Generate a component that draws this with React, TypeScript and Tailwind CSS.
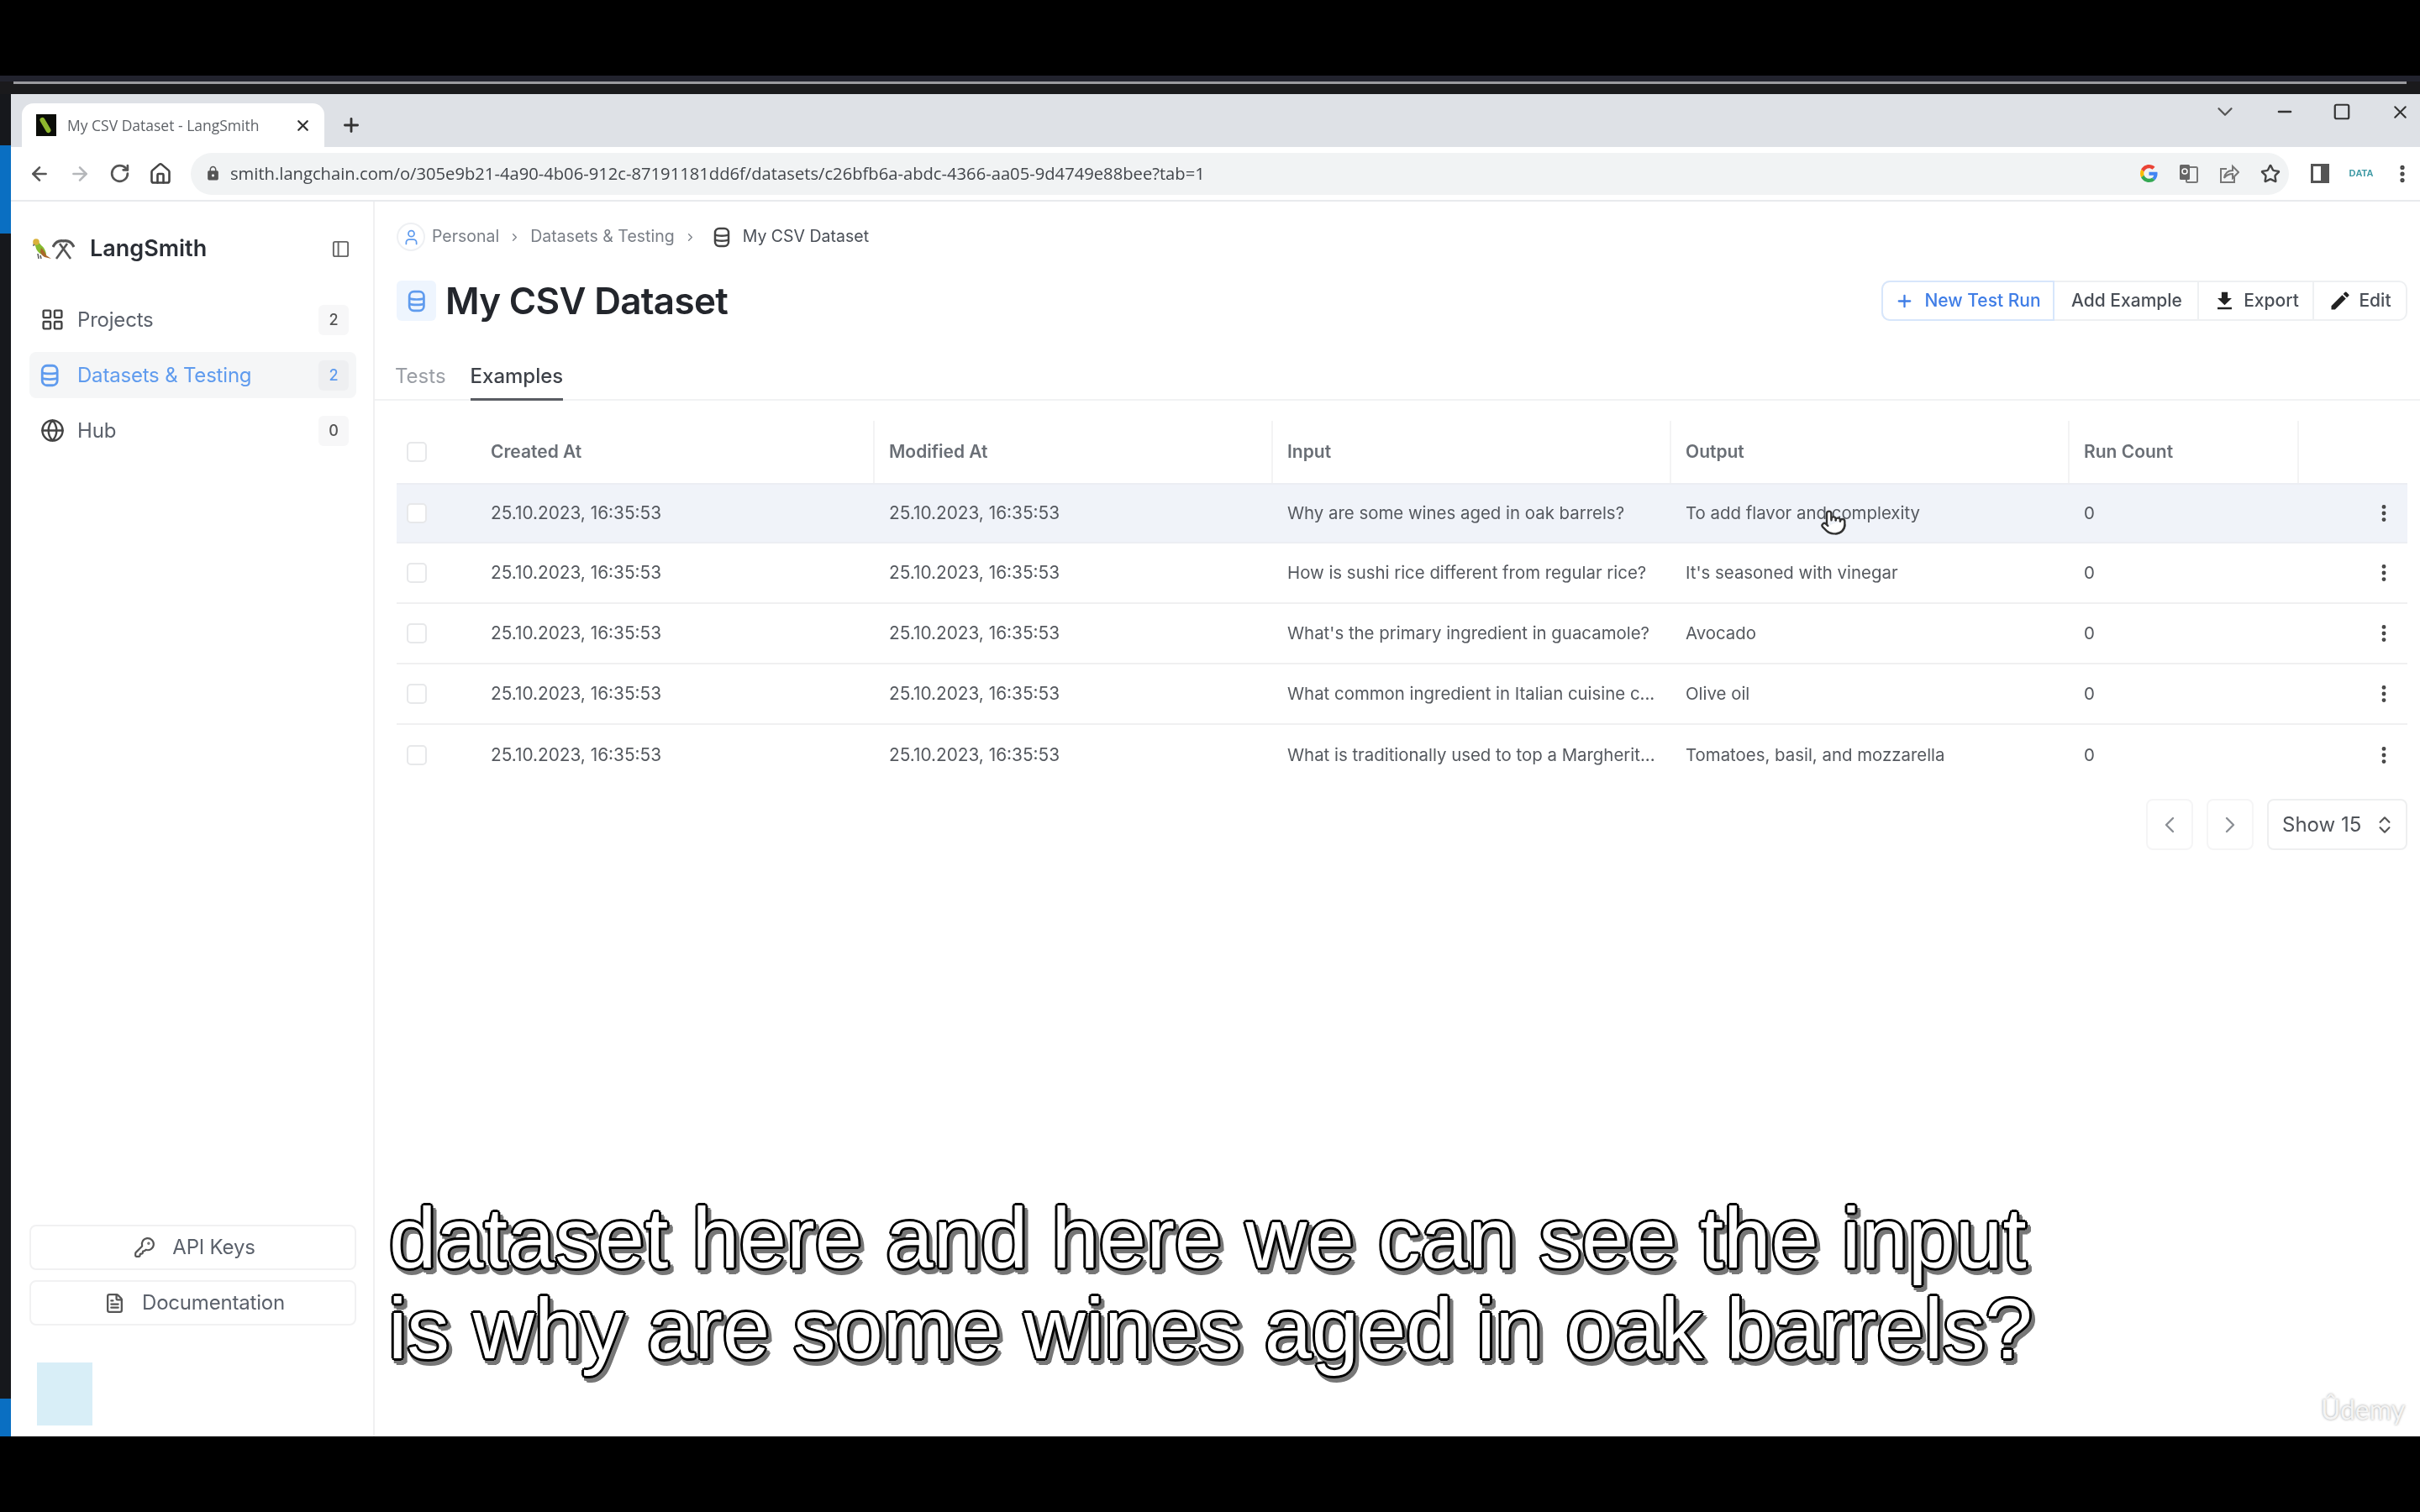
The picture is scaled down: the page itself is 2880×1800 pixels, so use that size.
import {
  ArrowLeft,
  ArrowRight,
  ChevronDown,
  ChevronLeft,
  ChevronRight,
  ChevronsUpDown,
  EllipsisVertical,
  FileText,
  Globe,
  House,
  KeyRound,
  LayoutGrid,
  Minus,
  PanelLeft,
  Plus,
  Pointer,
  RotateCw,
  Square,
  Star,
  User,
  X,
} from "lucide-react";
import { MdEdit, MdFileDownload, MdLock } from "react-icons/md";

const rows = [
  ["Why are some wines aged in oak barrels?", "To add flavor and complexity"],
  ["How is sushi rice different from regular rice?", "It's seasoned with vinegar"],
  ["What's the primary ingredient in guacamole?", "Avocado"],
  ["What common ingredient in Italian cuisine c...", "Olive oil"],
  ["What is traditionally used to top a Margherit...", "Tomatoes, basil, and mozzarella"],
];

// stacked barrel, narrower and heavier than lucide's Database
const DbIcon = ({ height, color }: { height: number; color: string }) => (
  <svg width={height * 0.8} height={height} viewBox="0 0 20 25" fill="none" stroke={color} strokeWidth="2.500">
    <rect x="2" y="2" width="16" height="21" rx="5" />
    <path d="M2 9.500c3 1.500 13 1.500 16 0" />
    <path d="M2 15.500c3 1.500 13 1.500 16 0" />
  </svg>
);

const Parrot = () => (
  <svg width="25" height="26" viewBox="0 0 25 26">
    <path d="M3 6l-1 4 3-1z" fill="#555" />
    <path d="M4 6c3-3 6 0 8 3 4 3 6 8 6 12-5 0-10-3-12-8z" fill="#86bb2f" />
    <circle cx="6" cy="5" r="3.800" fill="#d9b13b" />
    <path d="M12 12c3 3 5 6 6 9l6 4-8-2c-2-1-4-3-5-6z" fill="#a9662a" />
    <path d="M8 19l1 6M11 21l1 4" stroke="#555" strokeWidth="1.500" />
  </svg>
);

const Tools = () => (
  <svg width="27" height="25" viewBox="0 0 27 25" fill="none" stroke="#555" strokeWidth="2.600">
    <path d="M5 24L18 6" />
    <path d="M22 24L9 6" />
    <path d="M1 10c3-6 8-8 13-7" strokeWidth="3.200" />
    <path d="M26 10c-3-6-8-8-13-7" strokeWidth="3.200" />
  </svg>
);

const GoogleLogo = () => (
  <svg width="21" height="21" viewBox="0 0 48 48">
    <path fill="#EA4335" d="M24 9.500c3.500 0 6.700 1.200 9.200 3.600l6.900-6.900C35.900 2.400 30.500 0 24 0 14.600 0 6.500 5.400 2.600 13.200l8 6.200C12.500 13.700 17.800 9.500 24 9.500z" />
    <path fill="#4285F4" d="M47 24.500c0-1.600-.1-3.100-.4-4.500H24v9h13c-.6 3-2.200 5.500-4.800 7.200l7.800 6C44.300 37.600 47 31.600 47 24.500z" />
    <path fill="#FBBC05" d="M10.600 28.600c-.5-1.400-.8-3-.8-4.600s.3-3.200.8-4.600l-8-6.200C.9 16.500 0 20.100 0 24s.9 7.500 2.600 10.800l8-6.200z" />
    <path fill="#34A853" d="M24 48c6.500 0 11.900-2.100 15.900-5.800l-7.800-6c-2.100 1.400-4.900 2.300-8.100 2.300-6.200 0-11.500-4.200-13.400-9.900l-8 6.200C6.500 42.600 14.600 48 24 48z" />
  </svg>
);

const TranslateIcon = () => (
  <svg width="23" height="24" viewBox="0 0 23 24">
    <rect x="9" y="4" width="13" height="18" rx="1.500" fill="none" stroke="#777" strokeWidth="2" />
    <rect x="1" y="1" width="12" height="18" rx="1.500" fill="#666" />
    <circle cx="7" cy="9" r="3" fill="none" stroke="#fff" strokeWidth="1.500" />
  </svg>
);

const ShareIcon = () => (
  <svg width="24" height="24" viewBox="0 0 24 24" fill="none" stroke="#777" strokeWidth="2">
    <path d="M9 6H2v16h16v-6" />
    <path d="M6 17c1-6 5-9 10-9V3l7 7-7 7v-5c-4 0-7 1-10 5z" />
  </svg>
);

const SidePanelIcon = () => (
  <svg width="22" height="23" viewBox="0 0 22 23">
    <rect x="1.500" y="1.500" width="19" height="20" fill="none" stroke="#555" strokeWidth="3" />
    <rect x="12" y="2" width="8" height="19" fill="#555" />
  </svg>
);

const NavItem = ({
  icon,
  label,
  count,
  active,
}: {
  icon: React.ReactNode;
  label: string;
  count: number;
  active?: boolean;
}) => (
  <div
    className={
      "flex h-[55px] items-center rounded-lg pl-[13px] pr-[9px] " +
      (active ? "bg-[#f5f6f7] text-[#5f9bee]" : "text-[#5b616b]")
    }
  >
    <span className="flex w-[44px] shrink-0">{icon}</span>
    <span className="flex-1 text-[24px] tracking-[-0.2px]">{label}</span>
    <span
      className={
        "flex h-[36px] w-[36px] items-center justify-center rounded-md text-[18px] font-medium " +
        (active ? "bg-[#eeeff1]" : "bg-[#f7f7f8] text-[#555]")
      }
    >
      {count}
    </span>
  </div>
);

const SideButton = ({ icon, label }: { icon: React.ReactNode; label: string }) => (
  <div className="flex h-[54px] items-center justify-center gap-[20px] rounded-lg border-2 border-[#f1f1f2] pl-[4px] text-[24px] tracking-[-0.2px] text-[#5b616b]">
    {icon}
    {label}
  </div>
);

const Sidebar = () => (
  <aside className="flex w-[433px] shrink-0 flex-col border-r-2 border-[#f0f0f1] pb-[13px] pl-[22px] pr-[20px]">
    <div className="mt-[39px] flex h-[34px] items-center pl-[2px] pr-[7px]">
      <Parrot />
      <Tools />
      <span className="ml-[18px] flex-1 text-[27px] font-semibold text-[#2b2f36]">LangSmith</span>
      <PanelLeft size={23} color="#666" strokeWidth={2} />
    </div>
    <nav className="mt-[40px] flex flex-col gap-[11px]">
      <NavItem icon={<LayoutGrid size={29} color="#444" strokeWidth={2} />} label="Projects" count={2} />
      <NavItem icon={<DbIcon height={28} color="#5f9bee" />} label="Datasets & Testing" count={2} active />
      <NavItem icon={<Globe size={29} color="#444" strokeWidth={2} />} label="Hub" count={0} />
    </nav>
    <div className="flex-1" />
    <div className="flex flex-col gap-[12px]">
      <SideButton icon={<KeyRound size={26} color="#555" strokeWidth={2} />} label="API Keys" />
      <SideButton icon={<FileText size={25} color="#555" strokeWidth={2.200} />} label="Documentation" />
    </div>
    <div className="ml-[9px] mt-[44px] h-[75px] w-[66px] bg-[#d8eef7]" />
  </aside>
);

const Header = () => (
  <>
    <div className="mt-[25px] flex h-[34px] items-center text-[19.500px] text-[#7a7f87]">
      <span className="flex h-[34px] w-[34px] items-center justify-center rounded-full border-2 border-[#eef0f3]">
        <User size={21} color="#5f9bee" strokeWidth={2} />
      </span>
      <span className="ml-[8px]">Personal</span>
      <ChevronRight size={15} className="mx-[11px]" />
      <span>Datasets &amp; Testing</span>
      <ChevronRight size={15} className="mx-[11px]" />
      <span className="ml-[9px] flex">
        <DbIcon height={25} color="#444" />
      </span>
      <span className="ml-[15px] text-[#4a4f57]">My CSV Dataset</span>
    </div>
    <div className="mt-[35px] flex h-[48px] items-center">
      <span className="flex h-[48px] w-[47px] items-center justify-center rounded-md bg-[#eef5fe]">
        <DbIcon height={27} color="#5f9bee" />
      </span>
      <h1 className="ml-[11px] flex-1 text-[44px] font-semibold tracking-[-0.7px] text-[#23262c]">My CSV Dataset</h1>
      <div className="flex h-[48px] items-stretch rounded-[10px] border-2 border-[#eef0f2] text-[21px] font-medium text-[#4a4f57]">
        <div className="-m-[2px] mr-0 flex w-[206px] items-center justify-center gap-[12px] rounded-l-[10px] border-2 border-[#d7e6fb] text-[#3f7de6]">
          <Plus size={23} strokeWidth={2.400} />
          New Test Run
        </div>
        <div className="flex w-[170px] items-center justify-center pl-[2px]">Add Example</div>
        <div className="flex w-[137px] items-center justify-center gap-[8px] border-l-2 border-[#eef0f2]">
          <MdFileDownload size={29} color="#222" />
          Export
        </div>
        <div className="flex w-[111px] items-center justify-center gap-[8px] border-l-2 border-[#eef0f2]">
          <MdEdit size={28} color="#222" />
          Edit
        </div>
      </div>
    </div>
    <div className="-ml-[26px] -mr-[15px] mt-[39px] flex h-[56px] gap-[29px] border-b-2 border-[#f1f2f3] pl-[24px] text-[24px]">
      <span className="flex items-center text-[#9a9ea5]">Tests</span>
      <span className="-mb-[2px] flex items-center border-b-[3px] border-[#5a5d63] font-medium text-[#3e4249]">Examples</span>
    </div>
  </>
);

const gridCols = "grid grid-cols-[112px_455px_474px_474px_474px_273px_129px] items-center";

const Checkbox = () => <span className="ml-[12px] block h-[24px] w-[24px] rounded-[5px] border-2 border-[#e7e8ea] bg-white" />;

const ExamplesTable = () => (
  <div className="mt-[24px]">
    <div className={gridCols + " h-[74px] text-[21px] font-semibold text-[#6a6f76]"}>
      <Checkbox />
      <span>Created At</span>
      {["Modified At", "Input", "Output", "Run Count"].map((title) => (
        <span key={title} className="flex h-full items-center border-l-2 border-[#f3f3f4] pl-[17px]">
          {title}
        </span>
      ))}
      <span className="h-full border-l-2 border-[#f3f3f4]" />
    </div>
    {rows.map(([input, output], i) => (
      <div
        key={input}
        className={
          gridCols +
          " h-[72px] text-[20.400px] text-[#55595f] " +
          (i === 0 ? "border-y-2 border-[#eceef3] bg-[#f0f3f9]" : i < 4 ? "border-b-2 border-[#f0f0f1]" : "")
        }
      >
        <Checkbox />
        <span className="whitespace-nowrap text-[20.800px]">25.10.2023, 16:35:53</span>
        <span className="whitespace-nowrap pl-[19px] text-[20.800px]">25.10.2023, 16:35:53</span>
        <span className="whitespace-nowrap pl-[19px]">{input}</span>
        <span className="whitespace-nowrap pl-[19px]">{output}</span>
        <span className="pl-[19px]">0</span>
        <span className="flex justify-end pr-[13px]">
          <EllipsisVertical size={26} color="#444" strokeWidth={2.500} />
        </span>
      </div>
    ))}
  </div>
);

const Pagination = () => (
  <div className="mt-[16px] flex h-[61px] justify-end gap-[16px]">
    <span className="flex w-[56px] items-center justify-center rounded-lg border-2 border-[#f5f5f6]">
      <ChevronLeft size={32} color="#8b8f95" strokeWidth={1.800} />
    </span>
    <span className="flex w-[56px] items-center justify-center rounded-lg border-2 border-[#f5f5f6]">
      <ChevronRight size={32} color="#8b8f95" strokeWidth={1.800} />
    </span>
    <span className="flex w-[167px] items-center justify-between rounded-lg border-2 border-[#eeeff0] pl-[16px] pr-[12px] text-[24px] text-[#4f5359]">
      Show 15
      <ChevronsUpDown size={26} color="#555" strokeWidth={2} />
    </span>
  </div>
);

const BrowserChrome = () => (
  <>
    <div className="flex h-[63px] bg-[#dee1e6] pl-[13px] font-['Open_Sans',sans-serif]">
      <div className="mt-[11px] flex h-[52px] w-[360px] items-center rounded-t-[14px] bg-white pl-[17px] pr-[15px]">
        <span className="relative h-[26px] w-[24px] overflow-hidden bg-[#0b0d08]">
          <span className="absolute left-[8px] top-[3px] h-[20px] w-[6px] -rotate-[30deg] rounded-full bg-[#8fb82e]" />
        </span>
        <span className="ml-[13px] flex-1 whitespace-nowrap text-[17.500px] text-[#5f6368]">My CSV Dataset - LangSmith</span>
        <X size={21} color="#333" strokeWidth={2.600} />
      </div>
      <Plus size={26} color="#333" strokeWidth={2.600} className="ml-[19px] mt-[24px]" />
      <div className="-mt-[2px] ml-auto flex h-[46px] items-center">
        <ChevronDown size={30} color="#555" strokeWidth={1.800} className="mr-[44px]" />
        <Minus size={24} color="#333" strokeWidth={2.600} className="mr-[45px]" />
        <Square size={22} color="#333" strokeWidth={2.400} className="mr-[46px]" />
        <X size={25} color="#333" strokeWidth={2} className="mr-[11px]" />
      </div>
    </div>
    <div className="flex h-[65px] items-center border-b-2 border-[#e8eaed] bg-white pl-[21px]">
      <ArrowLeft size={26} color="#555" strokeWidth={2.400} className="mr-[22px]" />
      <ArrowRight size={26} color="#b5b7ba" strokeWidth={2.400} className="mr-[22px]" />
      <RotateCw size={25} color="#555" strokeWidth={2.600} className="mr-[22px]" />
      <House size={28} color="#444" strokeWidth={2.200} />
      <div className="ml-[22px] flex h-[50px] w-[2497px] items-center rounded-full bg-[#f1f3f4] pl-[17px]">
        <MdLock size={19} color="#555" />
        <span className="ml-[11px] flex-1 whitespace-nowrap font-['Open_Sans',sans-serif] text-[20.200px] text-[#42464b]">
          smith.langchain.com/o/305e9b21-4a90-4b06-912c-87191181dd6f/datasets/c26bfb6a-abdc-4366-aa05-9d4749e88bee?tab=1
        </span>
        <span className="flex items-center gap-[25px] pr-[10px]">
          <GoogleLogo />
          <TranslateIcon />
          <ShareIcon />
          <Star size={24} color="#444" strokeWidth={2.400} />
        </span>
      </div>
      <span className="ml-[26px]">
        <SidePanelIcon />
      </span>
      <span className="ml-[23px] w-[30px] text-center font-['Liberation_Sans',sans-serif] text-[11px] font-bold leading-none text-[#3f9aa5]">
        DATA
      </span>
      <EllipsisVertical size={26} color="#444" strokeWidth={2.800} className="ml-[21px]" />
    </div>
  </>
);

export default function App() {
  return (
    <div className="relative flex h-[1800px] w-[2880px] flex-col overflow-hidden bg-black font-['Inter',sans-serif]">
      <div className="h-[90px]" />
      <div className="h-[7px] bg-[#22232e]" />
      <div className="h-[15px] bg-[#1a1a1c] pl-[16px] pr-[16px]">
        <div className="h-[3px] bg-[#9a9a9e]" />
      </div>
      <div className="flex h-[1598px]">
        <div className="flex w-[13px] flex-col bg-[#16181c]">
          <div className="h-[61px]" />
          <div className="h-[105px] bg-[#0a6fc2]" />
          <div className="flex-1" />
          <div className="h-[45px] bg-[#0a6fc2]" />
        </div>
        <div className="flex flex-1 flex-col bg-white blur-[0.7px]">
          <BrowserChrome />
          <div className="flex flex-1">
            <Sidebar />
            <main className="flex-1 pl-[26px] pr-[15px]">
              <Header />
              <ExamplesTable />
              <Pagination />
            </main>
          </div>
        </div>
      </div>
      <div className="h-[90px]" />

      {/* hand cursor over the first row */}
      <Pointer size={32} color="#333" fill="#fff" strokeWidth={1.800} className="absolute left-[2166px] top-[606px]" />

      {/* burned-in subtitle: outline and drop shadow built from stacked text shadows */}
      <div className="absolute left-[463px] top-[1420px] whitespace-nowrap font-['Liberation_Sans',sans-serif] text-[101.300px] leading-[108px] text-white [text-shadow:3px_0_0_#000,-3px_0_0_#000,0_3px_0_#000,0_-3px_0_#000,2px_2px_0_#000,-2px_2px_0_#000,2px_-2px_0_#000,-2px_-2px_0_#000,6px_3px_0_#777,6px_6px_0_#777,3px_6px_0_#777,0_6px_0_#777,5px_7px_0_#777,3px_8px_0_#777,7px_5px_0_#777]">
        <div>dataset here and here we can see the input</div>
        <div className="-ml-[1px] tracking-[-0.2px]">is why are some wines aged in oak barrels?</div>
      </div>

      <div className="absolute left-[2762px] top-[1654px] font-['Lato',sans-serif] text-[32px] text-[#f4f4f4] [text-shadow:0_0_3px_#999]">
        Ûdemy
      </div>
    </div>
  );
}
